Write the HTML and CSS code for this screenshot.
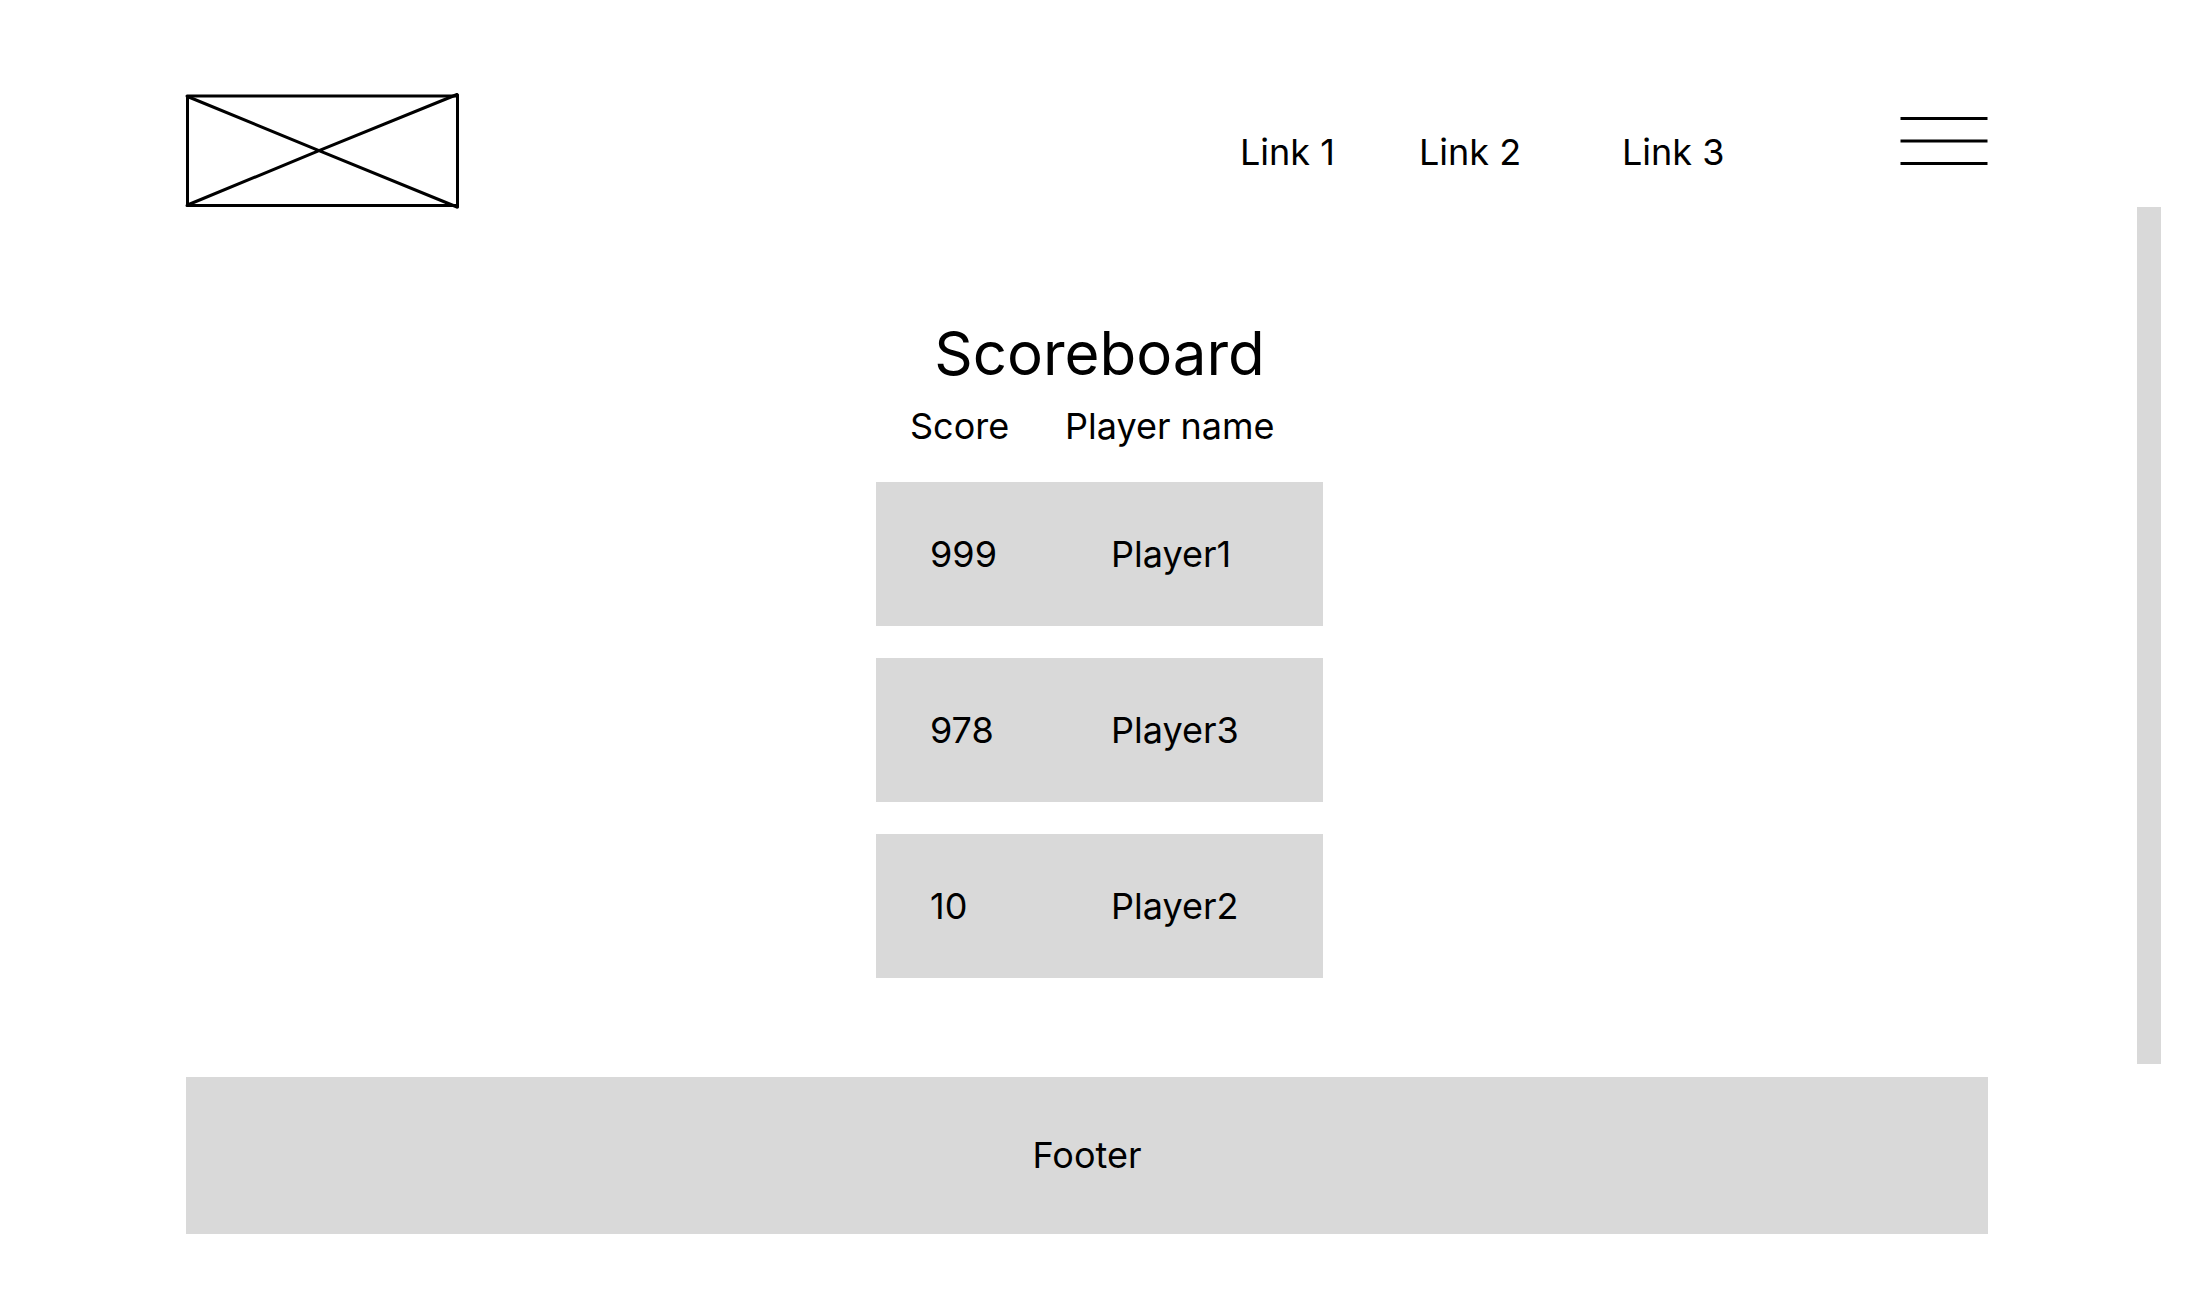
FILE: index.html
```html
<!DOCTYPE html>
<html lang="en">
<head>
  <meta charset="utf-8">
  <meta name="viewport" content="width=device-width, initial-scale=1">
  <title>Scoreboard</title>
  <link rel="stylesheet" href="styles.css">
</head>
<body>
  <div class="page">
    <header class="header">
      <a class="logo" href="#" aria-label="Home">
        <svg class="logo-image" width="272" height="112" viewBox="0 0 272 112" fill="none" stroke="#000" stroke-width="3" stroke-linecap="round" aria-hidden="true">
          <path d="M1 1H271M1.500 1V110.500M1 110.500H271M271.500 0V112"/>
          <path d="M1.500 1.500L133 55.700L271 112M1.500 110L133 55.700L271-.5"/>
        </svg>
      </a>
      <nav class="nav" aria-label="Main">
        <a class="nav-link" href="#">Link 1</a>
        <a class="nav-link" href="#">Link 2</a>
        <a class="nav-link" href="#">Link 3</a>
      </nav>
      <button class="menu" type="button" aria-label="Open menu">
        <svg class="menu-icon" width="88" height="48" viewBox="0 0 88 48" stroke="#000" stroke-width="3" aria-hidden="true">
          <path d="M.5 1.500H87.500M.5 24H87.500M.5 46.500H87.500"/>
        </svg>
      </button>
    </header>
    <main class="main">
      <h1 class="title">Scoreboard</h1>
      <table class="scores">
        <thead>
          <tr><th class="score" scope="col">Score</th><th class="player" scope="col">Player name</th></tr>
        </thead>
        <tbody>
          <tr><td class="score">999</td><td class="player">Player1</td></tr>
          <tr><td class="score">978</td><td class="player">Player3</td></tr>
          <tr><td class="score">10</td><td class="player">Player2</td></tr>
        </tbody>
      </table>
    </main>
    <div class="scroll-rail"></div>
    <footer class="footer">Footer</footer>
  </div>
</body>
</html>
```
FILE: styles.css
```css
* {
  box-sizing: border-box;
}

body {
  margin: 0;
  background: #fff;
  color: #000;
  font-family: Inter, "Liberation Sans", sans-serif;
  font-size: 36px;
  line-height: 44px;
}

.page {
  display: grid;
  grid-template-columns: 186px 1fr 149px 24px 38px;
  padding-bottom: 74px;
}

.header {
  grid-column: 2;
  grid-row: 1;
  display: flex;
  align-items: flex-start;
  padding-top: 95px;
}

.logo,
.logo-image,
.menu-icon {
  display: block;
}

.logo-image {
  overflow: visible;
}

.nav {
  display: grid;
  grid-template-columns: 179px 203px 278px;
  margin-top: 35px;
  margin-left: auto;
}

.nav-link {
  justify-self: start;
  color: inherit;
  text-decoration: none;
}

.menu {
  margin: 22px 0 0;
  padding: 0;
  border: 0;
  background: none;
  cursor: pointer;
}

.main {
  grid-column: 1 / -1;
  grid-row: 2;
  padding: 110px 0 99px;
}

.title {
  margin: 0 0 15px;
  font-size: 60px;
  font-weight: 400;
  line-height: 72px;
  text-align: center;
}

.scores {
  width: 447px;
  margin: 0 auto;
  border-spacing: 0;
  table-layout: fixed;
  text-align: left;
}

.scores th {
  padding: 0 0 2px;
  font-weight: 400;
}

.scores th.score {
  width: 189px;
  padding-left: 34px;
}

.scores td {
  height: 176px;
  padding: 0;
  border-top: 32px solid transparent;
  background: #d9d9d9;
  background-clip: padding-box;
}

.scores td.score {
  padding-left: 54px;
}

.scores td.player {
  padding-left: 46px;
}

.scroll-rail {
  grid-column: 4;
  grid-row: 2;
  margin-bottom: 13px;
  background: #d9d9d9;
}

.footer {
  grid-column: 2;
  grid-row: 3;
  padding: 56px 0 57px;
  background: #d9d9d9;
  text-align: center;
}
```
